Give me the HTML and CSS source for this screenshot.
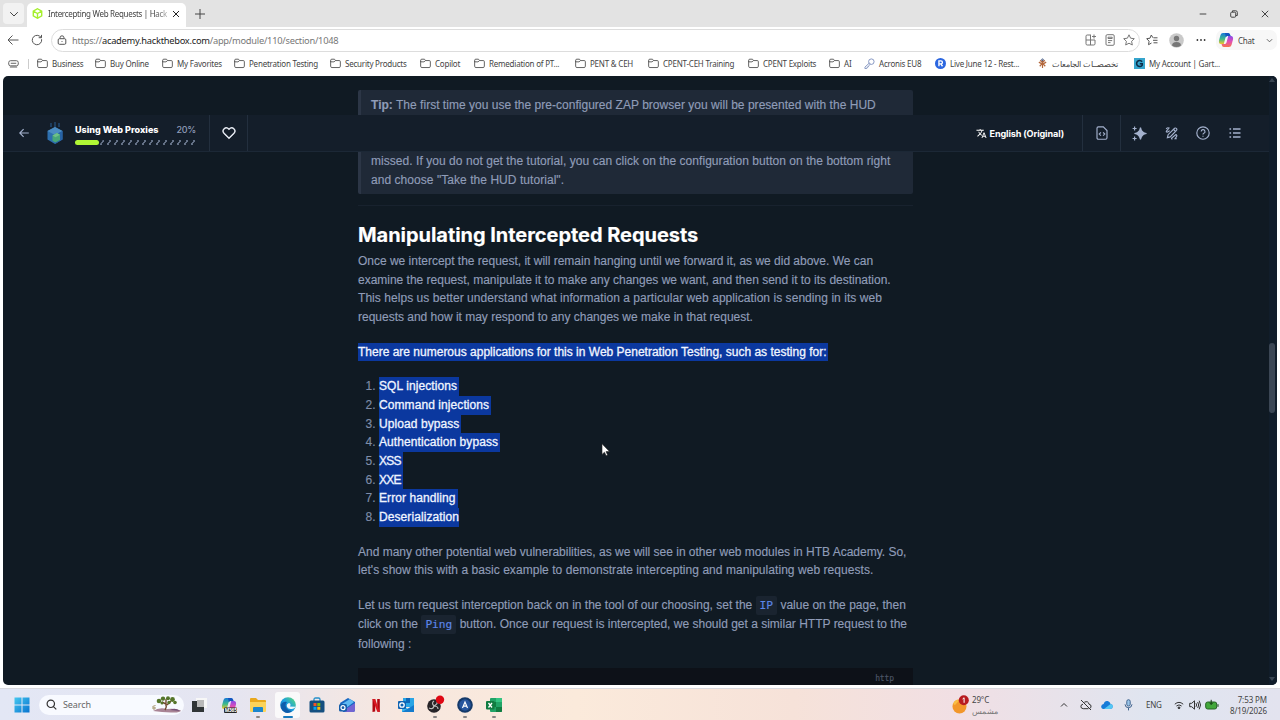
FILE: index.html
```html
<!DOCTYPE html>
<html lang="en">
<head>
  <meta charset="UTF-8" />
  <meta name="viewport" content="width=device-width, initial-scale=1.0"/>
  <title>Intercepting Web Requests | Hack The Box</title>
  <link rel="stylesheet" href="styles.css">
</head>
<body>
  <svg class="defs" width="0" height="0">
    <symbol id="folder" viewBox="0 0 12 12"><path d="M.7 3V9q0 1.4 1.4 1.4h7.8q1.4 0 1.4-1.4V4q0-1.2-1.2-1.2H6L4.9 1.3H2Q.7 1.3.7 2.6v1.6h3.7L6 2.8"/></symbol>
    <linearGradient id="copilot2" x1="0" y1="0" x2="0" y2="1">
      <stop offset="0" stop-color="#1577d8"/><stop offset=".55" stop-color="#3dbb8c"/><stop offset="1" stop-color="#f2c62c"/>
    </linearGradient>
    <linearGradient id="copilot3" x1="0" y1="0" x2="0" y2="1">
      <stop offset="0" stop-color="#8a4be8"/><stop offset=".5" stop-color="#e04fb4"/><stop offset="1" stop-color="#f8744c"/>
    </linearGradient>
    <linearGradient id="edge" x1="0" y1="1" x2="1" y2="0">
      <stop offset="0" stop-color="#0c59a4"/><stop offset=".5" stop-color="#1b9de2"/><stop offset="1" stop-color="#5fe06c"/>
    </linearGradient>
    <linearGradient id="win" x1="0" y1="0" x2="1" y2="1">
      <stop offset="0" stop-color="#45c8f0"/><stop offset="1" stop-color="#0873cf"/>
    </linearGradient>
    <symbol id="copilot-mark" viewBox="0 0 16 16">
      <path d="M5 1h5q1.600 0 2 1.500l.5 1.500H9.500Q8 4 7.500 5.500L5.800 12H3Q.500 12 1 8.500L2.500 3Q3 1 5 1z" fill="url(#copilot2)"/>
      <path d="M11 15H6q-1.600 0-2-1.500L3.500 12h3Q8 12 8.500 10.500L10.200 4H13q2.500 0 2 3.500L13.500 13Q13 15 11 15z" fill="url(#copilot3)"/>
      <path d="M7 1h3q1.600 0 2 1.500l.5 1.500H9.500Q8.300 4 7.900 5.200z" fill="#1454c0"/>
    </symbol>
  </svg>

  <div class="browser">
    <div class="tabs">
      <div class="tab-menu"><svg width="10" height="10" viewBox="0 0 10 10"><path d="M1.200 3.200L5 7l3.800-3.800"/></svg></div>
      <div class="tab">
        <svg class="favicon" width="11" height="11" viewBox="0 0 12 12"><path d="M6 .8l4.600 2.600v5.200L6 11.200 1.400 8.600V3.400zM1.400 3.400L6 6l4.600-2.600M6 6v5.200"/></svg>
        <span class="tab-title">Intercepting Web Requests | Hack</span>
        <svg class="tab-close" width="8" height="8" viewBox="0 0 8 8"><path d="M1 1l6 6M7 1L1 7"/></svg>
      </div>
      <svg class="new-tab" width="10" height="10" viewBox="0 0 10 10"><path d="M5 0v10M0 5h10"/></svg>
      <div class="window-buttons">
        <svg width="8" height="8" viewBox="0 0 8 8"><path d="M.7 4h6.600"/></svg>
        <svg width="8" height="8" viewBox="0 0 8 8"><rect x=".7" y="2.200" width="5" height="5" rx="1"/><path d="M2.500 2V.8h3.300q1.500 0 1.500 1.500v3.200H6"/></svg>
        <svg width="8" height="8" viewBox="0 0 8 8"><path d="M.8.800l6.400 6.400M7.200.8L.8 7.200"/></svg>
      </div>
    </div>

    <div class="toolbar">
      <svg width="12" height="12" viewBox="0 0 12 12"><path d="M11.500 6H1M5.500 1.500L1 6l4.500 4.500"/></svg>
      <svg class="reload" width="12" height="12" viewBox="0 0 12 12"><path d="M10.600 5.200A4.700 4.700 0 1 1 8.700 2.200l1.600 1.300M10.500.900v2.800H7.700"/></svg>
      <div class="address">
        <svg width="10" height="10" viewBox="0 0 10 10"><rect x="1.200" y="3.700" width="7.600" height="5.600" rx="1.200"/><path d="M3 3.600V2.800a2 2 0 0 1 4 0v.8M5 6v.900"/></svg>
        <span class="url">https://<b>academy.hackthebox.com</b>/app/module/110/section/1048</span>
        <div class="address-icons">
          <svg width="12" height="12" viewBox="0 0 12 12"><path d="M6 1H2.200Q1 1 1 2.200v7.600Q1 11 2.200 11h6.600Q10 11 10 9.800V6H1M5.500 1v10M9 .5v4M7 2.500h4"/></svg>
          <svg width="12" height="12" viewBox="0 0 12 12"><rect x="2" y=".7" width="8.200" height="10.600" rx="1.200"/><path d="M4 3.200h4.200v1.300H4zM4 6.600h4.200M4 8.600h2.500"/></svg>
          <svg width="12" height="12" viewBox="0 0 12 12"><path d="M6 .8l1.600 3.400 3.700.5-2.700 2.600.7 3.700L6 9.200 2.700 11l.7-3.700L.7 4.700l3.700-.5z"/></svg>
        </div>
      </div>
      <div class="toolbar-right">
        <svg width="12" height="12" viewBox="0 0 12 12"><path d="M7 3.800L5.300 1 4 4.200l-3.300.5 2.400 2.500-.6 3.500L5.500 9M7.500 3.800h4M7 6.300h4.500M7.500 8.800h4"/></svg>
        <svg class="avatar" width="15" height="15" viewBox="0 0 15 15"><circle cx="7.500" cy="7.500" r="7.300" fill="#c9c9c9"/><circle cx="7.500" cy="5.500" r="2.700" fill="#777"/><path d="M3 12.500q0-3.500 4.500-3.500t4.500 3.500q-2 1.500-4.500 1.500T3 12.500z" fill="#777"/></svg>
        <svg class="dots" width="10" height="4" viewBox="0 0 10 4"><circle cx="1.400" cy="2" r=".9"/><circle cx="5" cy="2" r=".9"/><circle cx="8.600" cy="2" r=".9"/></svg>
        <div class="chat">
          <svg width="16" height="16"><use href="#copilot-mark"/></svg>
          <span>Chat</span>
          <svg class="chevron" width="7" height="7" viewBox="0 0 8 8"><path d="M1 2.500l3 3 3-3"/></svg>
        </div>
      </div>
    </div>

    <div class="bookmarks">
      <div class="essentials"><svg width="12" height="10" viewBox="0 0 12 10"><rect x=".8" y="1.400" width="10.400" height="5.600" rx="2"/><path d="M3 4.200h6M2 8.300h8"/></svg></div>
      <div class="bookmark"><svg><use href="#folder"/></svg>Business</div>
      <div class="bookmark"><svg><use href="#folder"/></svg>Buy Online</div>
      <div class="bookmark"><svg><use href="#folder"/></svg>My Favorites</div>
      <div class="bookmark"><svg><use href="#folder"/></svg>Penetration Testing</div>
      <div class="bookmark"><svg><use href="#folder"/></svg>Security Products</div>
      <div class="bookmark"><svg><use href="#folder"/></svg>Copilot</div>
      <div class="bookmark"><svg><use href="#folder"/></svg>Remediation of PT...</div>
      <div class="bookmark"><svg><use href="#folder"/></svg>PENT &amp; CEH</div>
      <div class="bookmark"><svg><use href="#folder"/></svg>CPENT-CEH Training</div>
      <div class="bookmark"><svg><use href="#folder"/></svg>CPENT Exploits</div>
      <div class="bookmark"><svg><use href="#folder"/></svg>AI</div>
      <div class="bookmark"><svg viewBox="0 0 12 12"><g stroke="#7d8fbd"><circle cx="8" cy="4" r="3"/><path d="M5.800 5.500L1 10v1.500h2l.3-1.300 1.200-.3.300-1.200L7 6.800"/></g></svg>Acronis EU8</div>
      <div class="bookmark"><svg viewBox="0 0 12 12"><circle cx="6" cy="6" r="6" fill="#2b66e0" stroke="none"/><path stroke="#fff" stroke-width="1.500" d="M4.300 9V3.200h2.200a1.500 1.500 0 0 1 0 3.200H4.300M6.400 6.500L8.200 9"/></svg>Live June 12 - Rest...</div>
      <div class="bookmark"><svg viewBox="0 0 12 12"><g stroke="#b4683c" stroke-width="1.300"><path d="M6 2v9M2 4.500l4 2.300 4-2.300M3 9l3-3.500L9 9M3.500 2.500L6 5l2.500-2.500"/></g><circle cx="6" cy="2" r="1" stroke="#3d5a8a"/></svg><span lang="ar" dir="rtl">تخصصــات الجامعات</span></div>
      <div class="bookmark"><svg viewBox="0 0 12 12"><path fill="#36a5cd" stroke="none" d="M0 0h12v12H0z"/><path stroke="#0b2c48" stroke-width="1.700" d="M8.800 4A3.300 3.300 0 1 0 9 7.700V6.300H6.300"/></svg>My Account | Gart...</div>
    </div>

    <div class="page">
      <main class="content">
        <blockquote class="tip">
          <p><strong>Tip:</strong> The first time you use the pre-configured ZAP browser you will be presented with the HUD</p>
          <p class="tip-rest">missed. If you do not get the tutorial, you can click on the configuration button on the bottom right<br>and choose "Take the HUD tutorial".</p>
        </blockquote>
        <hr>
        <h2>Manipulating Intercepted Requests</h2>
        <p class="intro">Once we intercept the request, it will remain hanging until we forward it, as we did above. We can<br>examine the request, manipulate it to make any changes we want, and then send it to its destination.<br><span class="loose">This helps us better understand what information a particular web application is sending in its web</span><br>requests and how it may respond to any changes we make in that request.</p>
        <p><mark>There are numerous applications for this in Web Penetration Testing, such as testing for:</mark></p>
        <ol>
          <li><mark>SQL injections</mark></li>
          <li><mark>Command injections</mark></li>
          <li><mark>Upload bypass</mark></li>
          <li><mark>Authentication bypass</mark></li>
          <li><mark class="short">XSS</mark></li>
          <li><mark class="short">XXE</mark></li>
          <li><mark>Error handling</mark></li>
          <li><mark class="last">Deserialization</mark></li>
        </ol>
        <p><span class="tight">And many other potential web vulnerabilities, as we will see in other web modules in HTB Academy. So,</span><br><span class="loose">let's show this with a basic example to demonstrate intercepting and manipulating web requests.</span></p>
        <p class="with-code">Let us turn request interception back on in the tool of our choosing, set the <code>IP</code> value on the page, then<br>click on the <code>Ping</code> button. Once our request is intercepted, we should get a similar HTTP request to the<br>following :</p>
        <div class="snippet">http</div>
      </main>

      <header class="module-bar">
        <div class="module">
          <svg class="back" width="10" height="10" viewBox="0 0 10 10"><path d="M9.800 5H.8M4.600 1.200L.8 5l3.800 3.800"/></svg>
          <svg class="module-logo" width="18" height="23" viewBox="0 0 18 23">
            <path d="M5 1v4M9 0v6M13 1v4" stroke="#1d3d5e" stroke-width="2"/>
            <path d="M9 5l7.500 4v8.500L9 22l-7.500-4.500V9z" fill="#2d6fae"/>
            <path d="M9 5l7.500 4L9 13 1.500 9z" fill="#4b8cc2"/>
            <path d="M9 13l7.500-4v8.500L9 22z" fill="#2762a5"/>
            <path d="M6.500 13.500L11 11l3 1.700v5.200L9.500 20.500l-3-1.700z" fill="#48a779"/>
            <path d="M6.500 13.500L11 11l3 1.700-4.500 2.500z" fill="#6fc088"/>
          </svg>
          <div class="progress">
            <div class="progress-title"><span>Using Web Proxies</span><span class="percent">20%</span></div>
            <div class="progress-track"><div class="progress-bar" style="width: 20%"></div><div class="progress-rest"></div></div>
          </div>
        </div>
        <div class="cell"><svg width="14" height="14" viewBox="0 0 14 14"><path class="heart" d="M7 12.200L2 7.300C-.8 4.200 3.600-.400 7 3.200c3.400-3.600 7.800 1 5 4.100z"/></svg></div>
        <div class="language">
          <svg width="11" height="11" viewBox="0 0 24 24"><path fill="#fff" d="M12.870 15.070l-2.540-2.510.03-.03A17.500 17.500 0 0 0 14.070 6H17V4h-7V2H8v2H1v2h11.170A15.700 15.700 0 0 1 9 11.350 15.600 15.600 0 0 1 6.690 8h-2a17.600 17.600 0 0 0 2.980 4.560l-5.090 5.020L4 19l5-5 3.110 3.110zM18.500 10h-2L12 22h2l1.120-3h4.750L21 22h2zm-2.620 7l1.620-4.330L19.120 17z"/></svg>
          English (Original)
        </div>
        <div class="cell bordered"><svg width="12" height="14" viewBox="0 0 12 14"><path d="M2.300.800h5L11 4.500v7.200q0 1.500-1.500 1.500h-7Q1 13.200 1 11.700V2.200Q1 .800 2.300.800zM4.900 6.300L3.200 8l1.700 1.700M7.100 6.300L8.800 8 7.100 9.700"/></svg></div>
        <div class="tools">
          <svg width="15" height="15" viewBox="0 0 15 15"><path class="spark" d="M8.500 1.500Q9.300 6.700 14.500 7.500 9.300 8.300 8.500 13.500 7.700 8.300 2.500 7.500 7.700 6.700 8.500 1.500z"/><path d="M2.600.5v4M.6 2.500h4M2.600 10.500v4M.6 12.500h4"/></svg>
          <svg width="13" height="13" viewBox="0 0 13 13"><path d="M2.400 10.600l.7-2.900 6.500-6.400q.9-.7 1.800.1t.1 1.900L5.200 9.900zM8.600 2.500l1.900 1.900M1 4.600L4 1Q2 .2 1.200 1.900M1 4.600Q2.500 6 4.600 3.600M7.500 11.800q-1.300.6-.8-.8L11 7.500q1.500 1 .3 2.400l-1.200 1.800h1.700"/></svg>
          <svg width="14" height="14" viewBox="0 0 14 14"><circle cx="7" cy="7" r="6.200"/><path d="M5.200 5.600a1.900 1.900 0 1 1 2.600 1.700q-.8.400-.8 1.200M7 9.700v1"/></svg>
          <svg class="list-icon" width="12" height="12" viewBox="0 0 12 12"><path d="M4 2h7.500M4 6h7.500M4 10h7.500M.5 2h1.600M.5 6h1.600M.5 10h1.600"/></svg>
        </div>
      </header>

      <div class="scrollbar"><div class="arrow up"></div><div class="thumb"></div><div class="arrow down"></div></div>
      <svg class="cursor" width="10" height="14" viewBox="0 0 10 14"><path d="M1 .8v10.600L3.500 9.200l1.600 3.600 1.500-.7L5 8.600h3.500z" fill="#fff" stroke="#222" stroke-width=".6"/></svg>
    </div>
  </div>

  <footer class="taskbar">
    <svg class="start" width="16" height="16" viewBox="0 0 16 16"><path fill="url(#win)" d="M.500.500h7v7h-7zM8.500.500h7v7h-7zM.500 8.500h7v7h-7zM8.500 8.500h7v7h-7z"/></svg>
    <div class="search">
      <svg width="11" height="11" viewBox="0 0 11 11"><path d="M7.400 7.600L10.300 10.400M8.500 4.800a3.700 3.700 0 1 1-7.400 0 3.700 3.700 0 0 1 7.400 0z" fill="none" stroke="#333" stroke-width="1.200"/></svg>
      <span>Search</span>
      <svg class="tree" width="31" height="17" viewBox="0 0 31 17">
        <path d="M2 15q6-4 14-2 8-1 14 1.500Q29 17 20 16.500T2 15z" fill="#a98495"/>
        <path d="M14 14q2-3 1-6l-4-2M16 9l4-4M15 10V3" stroke="#70472e" stroke-width="1.400" fill="none"/>
        <g fill="#55752a"><circle cx="8" cy="5" r="2.300"/><circle cx="12" cy="2.600" r="2.200"/><circle cx="17" cy="2.200" r="2"/><circle cx="21.500" cy="3.500" r="2.400"/><circle cx="24" cy="6.500" r="1.800"/><circle cx="18" cy="6.500" r="1.700"/><circle cx="11" cy="7" r="1.500"/></g>
        <path d="M3 14v-3M1.500 10.500l3-1M1 12l4 0" stroke="#a5946b" fill="none"/>
        <path d="M19 14q5-3 10 1z" fill="#765177"/>
      </svg>
    </div>
    <div class="apps">
      <div class="app"><svg viewBox="0 0 16 16"><path fill="#f7f7f7" d="M5 1h11v10H5z"/><path fill="#303436" d="M1 4h5v6h7v5H1z"/><path fill="#b9b9b9" d="M6 3h7v7H6z"/></svg></div>
      <div class="app"><svg viewBox="0 0 16 16"><use href="#copilot-mark"/><rect x="3" y="10.500" width="13" height="5.500" rx="1" fill="#222"/><text x="3.800" y="15" font-size="4.800" font-weight="bold" fill="#fff">M365</text></svg></div>
      <div class="app running"><svg viewBox="0 0 16 16"><path fill="#e9a81c" d="M0 2q0-1 1-1h5l2 2h7q1 0 1 1v4H0z"/><path fill="#fbd35a" d="M0 5h16v9q0 1-1 1H1q-1 0-1-1z"/><path fill="#1b86cd" d="M3 11q0-1 1-1h8q1 0 1 1v4H3z"/></svg></div>
      <div class="app active"><svg viewBox="0 0 16 16"><circle cx="8" cy="8" r="7.800" fill="url(#edge)"/><path fill="#0d5cab" d="M1 8q2-4 6-3-3 3 0 7 2 2 5 2-5 4-9 0-2-2-2-6z"/><path fill="#eef6fb" d="M9 6Q6 7 7 10q1.500 3 6 1.700 2-.7 2.500-2L10 9.500Q11.500 7 9 6z"/></svg></div>
      <div class="app"><svg viewBox="0 0 16 16"><path d="M5 4V2.500Q5 1 6.500 1h3Q11 1 11 2.500V4" fill="none" stroke="#2490c9" stroke-width="1.300"/><rect x=".5" y="3.500" width="15" height="12" rx="1.500" fill="#154f80"/><path fill="#f35325" d="M4.500 6h3v3h-3z"/><path fill="#81bc06" d="M8.300 6h3v3h-3z"/><path fill="#05a6f0" d="M4.500 9.800h3v3h-3z"/><path fill="#ffba08" d="M8.300 9.800h3v3h-3z"/></svg></div>
      <div class="app"><svg viewBox="0 0 16 16"><path fill="#1767c2" d="M1 6l8-5 7 4v8q0 2-2 2H4z"/><path fill="#5fb9f2" d="M3 7l8-5 4 3-8 6z"/><path fill="#7264d2" d="M5 13l11-7v7q0 2-2 2H6z"/><rect x="0" y="7" width="8" height="7.500" rx="1.500" fill="#145dab"/><circle cx="4" cy="10.700" r="2" fill="none" stroke="#fff" stroke-width="1.200"/></svg></div>
      <div class="app"><svg viewBox="0 0 16 16"><path fill="#b1060f" d="M4.500 2h2.700v12.500l-2.700.4zM9.200 2h2.600v12.900l-2.600-.4z"/><path fill="#d91720" d="M4.500 2h2.700l4.600 12.900-2.700-.4z"/></svg></div>
      <div class="app"><svg viewBox="0 0 16 16"><path fill="#2aa5e5" d="M5 1h11v9H5z"/><path fill="#0e68b8" d="M8 1h4v5H8z"/><path fill="#36b5ef" d="M4 8l6 4 6-4v7H4z"/><path fill="#147bcd" d="M4 15l12-7v7z"/><rect x="0" y="4" width="8" height="8" rx="1" fill="#1064b3"/><circle cx="4" cy="8" r="2.200" fill="none" stroke="#fff" stroke-width="1.300"/></svg></div>
      <div class="app running"><svg class="recorder" viewBox="0 0 16 16"><circle cx="7" cy="9" r="6.800" fill="#272427"/><path d="M7 4q-3 2 0 5 4 0 4 3M7 9q-1 4-5 2M7 9q4-2 3-4" fill="none" stroke="#bbb" stroke-width="1.200"/><circle cx="13" cy="2.800" r="4.200" fill="#df0713"/></svg></div>
      <div class="app running"><svg viewBox="0 0 16 16"><circle cx="8" cy="8" r="7.800" fill="#153968"/><circle cx="8" cy="8" r="5.800" fill="#26559e"/><path d="M5.500 11L8 5l2.500 6M6.500 9.200h3" fill="none" stroke="#fff" stroke-width="1.200"/></svg></div>
      <div class="app running"><svg viewBox="0 0 16 16"><rect x="4" y="1" width="12" height="14" rx="1" fill="#21a366"/><path fill="#33c481" d="M10 1h5q1 0 1 1v3h-6z"/><path fill="#107c41" d="M4 5h6v5H4zM10 10h6v4q0 1-1 1h-5z"/><rect x="0" y="4" width="8.500" height="8.500" rx="1" fill="#107c41"/><path d="M2.500 6l3.500 4.500M6 6l-3.500 4.500" stroke="#fff" stroke-width="1.300"/></svg></div>
    </div>

    <div class="weather">
      <svg width="18" height="20" viewBox="0 0 18 20"><circle cx="7.500" cy="11.500" r="7" fill="#f2962a"/><path d="M1 9Q3 4 8 4.600L3 10z" fill="#f9bd45"/><circle cx="11.800" cy="5.300" r="5" fill="#b81b1f"/><path d="M10.600 4l1.500-1.200v5" fill="none" stroke="#fff"/></svg>
      <div class="weather-text"><span>29°C</span><span lang="ar" dir="rtl">مشمس</span></div>
    </div>
    <div class="tray">
      <svg width="8" height="8" viewBox="0 0 8 8"><path d="M1 5.500l3-3 3 3"/></svg>
      <svg width="12" height="12" viewBox="0 0 12 12"><path d="M4.300 3.200Q8.300 1.500 9 5.200q2.500.3 2 2.800-.3 1-1.200 1.300M8.500 9.700H3.200Q.700 9.500.900 7.300 1.100 5.300 3 5.200M1 1l10 10"/></svg>
      <svg width="12" height="10" viewBox="0 0 12 10"><path fill="#167bd8" stroke="none" d="M2.600 9Q0 8.700.2 6.300.5 4.300 2.600 4q1-3.300 4-2.900 2.300.3 3 2.900 2.200.3 2.200 2.600Q11.800 9 9.300 9z"/><path fill="#54c7f4" stroke="none" d="M3 9l6.600-5q2.200.3 2.200 2.600Q11.800 9 9.300 9z"/></svg>
      <svg width="9" height="12" viewBox="0 0 9 12"><g stroke="#41658f"><rect x="2.800" y=".7" width="3.400" height="6.300" rx="1.700" fill="#9bc6ea"/><path d="M1 5.300q.2 3.400 3.500 3.400T8 5.300M4.500 8.700v2.700"/></g></svg>
      <span>ENG</span>
      <svg width="10" height="10" viewBox="0 0 10 10"><path d="M.8 4.200q4.200-3.700 8.400 0M2.400 6q2.600-2.200 5.200 0"/><circle cx="5" cy="7.800" r=".9" fill="#333"/></svg>
      <svg width="12" height="12" viewBox="0 0 12 12"><path d="M.7 4.300h2l2.800-2.500v8.400L2.700 7.700h-2zM7 4.200q1.200 1.800 0 3.600M8.700 3q2 3 0 6M10.200 1.700q2.700 4.300 0 8.600"/></svg>
      <svg width="14" height="12" viewBox="0 0 14 12"><rect x=".7" y="3" width="11" height="7" rx="2" fill="#43a83b" stroke="#276425"/><path d="M13 5.200v2.600M6.200.8v4.500M4.500 3.700l1.700 1.800 1.700-1.800" stroke="#173e16"/></svg>
    </div>
    <div class="clock"><span>7:53 PM</span><span>8/19/2026</span></div>
  </footer>
</body>
</html>
```
FILE: styles.css
```css
body {
  margin: 0;
  width: 1280px;
  height: 720px;
  overflow: hidden;
  font-family: "Noto Sans", sans-serif;
  font-size: 8px;
  letter-spacing: -0.22px;
  color: #444;
  background: white;
}
svg {
  flex: none;
}
.defs {
  position: absolute;
}
.browser {
  height: 688px;
}
.browser svg {
  fill: none;
}

/* tab strip */
.tabs {
  display: flex;
  align-items: center;
  height: 27px;
  background: #e3e3e3;
}
.tabs svg {
  stroke: #444;
}
.tab-menu {
  display: flex;
  align-items: center;
  justify-content: center;
  width: 21px;
  height: 21px;
  margin-left: 3px;
  border-radius: 4px;
  background: #f2f2f2;
}
.tab {
  display: flex;
  align-items: center;
  align-self: flex-end;
  box-sizing: border-box;
  width: 159px;
  height: 24px;
  margin-left: 3px;
  padding: 0 6px 3px 5px;
  border-radius: 5px 5px 0 0;
  background: white;
}
.tabs .favicon {
  stroke: #a5ef2b;
  stroke-width: 1.5;
}
.tab-title {
  width: 121px;
  margin-left: 5px;
  white-space: nowrap;
  font-size: 8px;
  letter-spacing: -0.3px;
  mask-image: linear-gradient(to right, black 88%, rgba(0, 0, 0, 0.3));
}
.tabs .tab-close {
  margin-left: 3px;
  stroke: #222;
}
.new-tab {
  margin-left: 9px;
}
.window-buttons {
  display: flex;
  gap: 23px;
  margin-left: auto;
  margin-right: 11px;
}

/* address bar */
.toolbar {
  display: flex;
  align-items: center;
  height: 26px;
  padding-left: 7px;
}
.toolbar svg {
  stroke: #555;
}
.reload {
  margin-left: 12px;
}
.address {
  display: flex;
  align-items: center;
  box-sizing: border-box;
  width: 1089px;
  height: 23px;
  margin-left: 8px;
  padding: 0 4px 0 5px;
  border: 1px solid #ddd;
  border-radius: 12px;
}
.url {
  margin-left: 5px;
  font-size: 9.3px;
  letter-spacing: -0.26px;
  color: #777;
}
.url b {
  font-weight: normal;
  color: #222;
}
.address-icons {
  display: flex;
  gap: 7px;
  margin-left: auto;
}
.address-icons svg {
  stroke: #777;
}
.toolbar-right {
  display: flex;
  align-items: center;
  margin-left: 6px;
}
.avatar {
  margin-left: 11px;
}
.toolbar-right .avatar,
.chat svg {
  stroke: none;
}
.toolbar-right .dots {
  margin: 0 10px 0 12px;
  fill: #333;
  stroke: none;
}
.chat {
  display: flex;
  align-items: center;
  width: 59px;
  height: 20px;
  padding-left: 2px;
  border-radius: 7px;
  background: #f7f7f7;
}
.chat span {
  margin: 0 11px 0 4px;
}
.chat .chevron {
  stroke: #555;
}

/* favorites bar */
.bookmarks {
  display: grid;
  grid-template-columns: 29px 58px 67px 72px 96px 90px 54px 101px 73px 100px 81px 35px 71px 102px 97px 120px;
  align-items: center;
  height: 22px;
  padding-left: 8px;
  line-height: 12px;
}
.bookmarks svg {
  width: 11px;
  height: 11px;
  stroke: #555;
}
.bookmarks .essentials svg {
  height: 10px;
}
.essentials {
  display: flex;
  width: 20px;
  border-right: 1px solid #ccc;
}
.bookmark {
  display: flex;
  align-items: center;
  gap: 4px;
  padding-bottom: 1px;
  white-space: nowrap;
}
.bookmark span {
  font-size: 7.6px;
}

/* web page */
.page {
  position: relative;
  height: 609px;
  margin: 1px 3px 3px;
  overflow: hidden;
  border-radius: 5px;
  background: #101a23;
  font-family: "Liberation Sans", sans-serif;
}
.content {
  width: 555px;
  padding: 14px 0 0 355px;
  font-size: 12px;
  line-height: 18.67px;
  letter-spacing: 0.02px;
  color: #8f9cb8;
  white-space: nowrap;
  -webkit-text-stroke: 0.15px;
}
.content p {
  margin: 0 0 16px;
}
.tip {
  box-sizing: border-box;
  height: 104px;
  margin: 0;
  padding: 5.500px 10px;
  border-left: 3px solid #2c3646;
  border-radius: 2px;
  background: #1f2937;
}
.content .tip p {
  margin: 0;
}
.content .tip .tip-rest {
  margin-top: 37.500px;
  line-height: 19px;
  letter-spacing: 0.05px;
}
hr {
  margin: 11px 0 16px;
  border: 0;
  border-top: 1px solid #18222e;
}
h2 {
  margin: 0 0 4px;
  font-family: Inter, sans-serif;
  font-size: 20px;
  line-height: 26px;
  letter-spacing: -0.04px;
  color: white;
}
.content .intro {
  letter-spacing: -0.01px;
}
.content .loose {
  letter-spacing: 0.05px;
}
.content .tight {
  letter-spacing: -0.01px;
}
ol {
  margin: 0 0 16px;
  padding-left: 21px;
  letter-spacing: 0.08px;
}
li::marker {
  color: #7f8da8;
}
mark {
  display: inline-block;
  padding-right: 2px;
  background: #0b389f;
  color: #f0f5ff;
  letter-spacing: 0;
  -webkit-text-stroke: 0.3px;
}
li mark {
  letter-spacing: 0.08px;
}
li .short {
  letter-spacing: -0.7px;
}
mark.last {
  padding-right: 0;
}
.content .with-code {
  margin-bottom: 14px;
  line-height: 19.400px;
  letter-spacing: 0;
}
code {
  padding: 3px 4px;
  border-radius: 2px;
  background: #1a2430;
  font-family: "DejaVu Sans Mono", monospace;
  font-size: 11.2px;
  color: #5c86e8;
}
.snippet {
  box-sizing: border-box;
  height: 30px;
  padding-right: 19px;
  background: #0d1118;
  font-family: "DejaVu Sans Mono", monospace;
  font-size: 8px;
  line-height: 21px;
  letter-spacing: -0.1px;
  text-align: right;
  color: #4c5566;
}

/* sticky bar over the article */
.module-bar {
  position: absolute;
  top: 39px;
  left: 0;
  display: flex;
  box-sizing: border-box;
  width: 1266px;
  height: 37px;
  border-bottom: 1px solid #1c2836;
  background: #141e2a;
}
.module-bar svg {
  stroke: #a4b1cd;
  stroke-width: 1.15;
}
.module {
  display: flex;
  align-items: center;
  box-sizing: border-box;
  width: 207px;
  padding-left: 16px;
  border-right: 1px solid #232f3e;
}
.module-bar .module-logo {
  margin-left: 17px;
  stroke: none;
}
.progress {
  width: 121px;
  margin: 2px 0 0 11px;
}
.progress-title {
  display: flex;
  justify-content: space-between;
  align-items: center;
  height: 12px;
  margin-bottom: 4px;
  font-family: Inter, sans-serif;
  font-size: 9px;
  font-weight: 800;
  letter-spacing: 0.02px;
  color: white;
}
.percent {
  font-weight: 500;
  letter-spacing: -0.3px;
  color: #8f9cb8;
}
.progress-track {
  display: flex;
  height: 5px;
}
.progress-bar {
  flex: none;
  border-radius: 3px;
  background: #b1f735;
}
.progress-rest {
  width: 94px;
  margin-left: 2px;
  background: repeating-linear-gradient(to right, #647186 0 2px, transparent 2px 7px);
  transform: skewX(-35deg);
}
.cell {
  display: flex;
  align-items: center;
  justify-content: center;
  box-sizing: border-box;
  width: 38px;
  border-right: 1px solid #232f3e;
}
.heart {
  stroke: #e8ecf4;
  stroke-width: 1.4;
}
.cell.bordered {
  width: 39px;
  border-left: 1px solid #232f3e;
}
.language {
  display: flex;
  align-items: center;
  gap: 3px;
  margin-left: auto;
  margin-right: 18px;
  font-family: Inter, sans-serif;
  font-size: 9.1px;
  font-weight: 700;
  letter-spacing: -0.12px;
  color: white;
}
.module-bar .language svg {
  stroke: none;
}
.tools {
  display: flex;
  align-items: center;
  gap: 18px;
  padding: 0 28px 0 11px;
}
.tools .list-icon {
  margin-left: 1px;
  stroke-width: 1.4;
}
.spark {
  fill: #a4b1cd;
}
.scrollbar {
  position: absolute;
  top: 0;
  right: 0;
  width: 8px;
  height: 609px;
  background: #111d2a;
}
.thumb {
  width: 6px;
  height: 70px;
  margin-top: 261px;
  border-radius: 3px;
  background: #3b4654;
}
.arrow {
  width: 0;
  height: 0;
  border: 3px solid transparent;
}
.up {
  padding-top: 2px;
  border-top: 0;
  border-bottom: 4px solid #394552;
}
.down {
  margin-top: 264px;
  border-top: 4px solid #394552;
}
.cursor {
  position: absolute;
  left: 598px;
  top: 367px;
}

/* taskbar */
.taskbar {
  display: flex;
  align-items: center;
  box-sizing: border-box;
  height: 32px;
  padding: 0 13px 0 14px;
  border-top: 1px solid #d9d9de;
  background: linear-gradient(to right, #e3e7f5, #e5e5f1 18%, #f7e7df 31%, #fbeadb 45%, #f6e2d9 62%, #f1dfe4 75%, #dfe5f0 90%, #e3e3ef);
}
.search {
  display: flex;
  align-items: center;
  box-sizing: border-box;
  width: 145px;
  height: 20px;
  margin-left: 9px;
  padding: 0 2px 0 7px;
  border-radius: 10px;
  background: #f8faff;
}
.search span {
  margin: 0 auto 0 6px;
  font-size: 9px;
  letter-spacing: -0.1px;
  color: #666;
}
.apps {
  display: flex;
  margin-left: 2.500px;
}
.app {
  position: relative;
  display: flex;
  align-items: center;
  justify-content: center;
  width: 25px;
  height: 26px;
  margin-right: 4.550px;
  border-radius: 3px;
}
.app svg {
  width: 16px;
  height: 16px;
}
.app .recorder {
  overflow: visible;
}
.active {
  background: rgba(255, 255, 255, 0.75);
}
.running::after,
.active::after {
  content: "";
  position: absolute;
  bottom: 0;
  width: 4px;
  height: 1.500px;
  border-radius: 1px;
  background: #8a8684;
}
.active::after {
  width: 10px;
  background: #1679bd;
}
.weather {
  display: flex;
  align-items: center;
  gap: 2px;
  margin-left: auto;
  margin-right: 62px;
}
.weather-text,
.clock {
  display: flex;
  flex-direction: column;
  line-height: 11px;
  letter-spacing: -0.1px;
}
.weather-text span:last-child {
  color: #777;
}
.tray {
  display: grid;
  grid-template-columns: 20px 21px 23px 22px 28px 15px 16px 14px;
  align-items: center;
  margin-right: 11px;
}
.tray svg {
  fill: none;
  stroke: #333;
}
.clock {
  text-align: right;
}
```
